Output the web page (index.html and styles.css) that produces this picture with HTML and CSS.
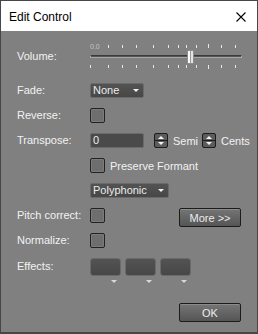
FILE: index.html
```html
<!DOCTYPE html>
<html lang="en">
<head>
    <meta charset="UTF-8">
    <meta name="viewport" content="width=device-width, initial-scale=1.0">
    <title>Edit Control</title>
    <link rel="stylesheet" href="styles.css">
</head>
<body>

    <div class="window">
        <div class="titlebar">
            <span class="title">Edit Control</span>
            <svg class="close" width="10" height="10" viewBox="0 0 10 10">
                <path d="M0.5 0.5 L9.5 9.5 M9.5 0.5 L0.5 9.5" stroke="#000" stroke-width="1.1" fill="none"/>
            </svg>
        </div>

        <div class="content">
            <div class="row row-volume">
                <span class="label">Volume:</span>
                <div class="slider">
                    <span class="slider-value">0.0</span>
                    <!-- tick positions follow the volume scale -->
                    <i class="tick tick-top" style="left:18px"></i>
                    <i class="tick tick-top" style="left:32px"></i>
                    <i class="tick tick-top" style="left:46px"></i>
                    <i class="tick tick-top" style="left:63px"></i>
                    <i class="tick tick-top" style="left:78px"></i>
                    <i class="tick tick-top" style="left:88px"></i>
                    <i class="tick tick-top" style="left:96px"></i>
                    <i class="tick tick-top" style="left:106px"></i>
                    <i class="tick tick-top tick-major" style="left:118px"></i>
                    <i class="tick tick-top" style="left:131px"></i>
                    <i class="tick tick-top" style="left:145px"></i>
                    <div class="track"></div>
                    <i class="tick tick-bottom" style="left:0px"></i>
                    <i class="tick tick-bottom" style="left:18px"></i>
                    <i class="tick tick-bottom" style="left:32px"></i>
                    <i class="tick tick-bottom" style="left:46px"></i>
                    <i class="tick tick-bottom" style="left:63px"></i>
                    <i class="tick tick-bottom" style="left:78px"></i>
                    <i class="tick tick-bottom" style="left:88px"></i>
                    <i class="tick tick-bottom" style="left:96px"></i>
                    <i class="tick tick-bottom" style="left:106px"></i>
                    <i class="tick tick-bottom tick-major" style="left:118px"></i>
                    <i class="tick tick-bottom" style="left:131px"></i>
                    <i class="tick tick-bottom" style="left:145px"></i>
                    <div class="thumb" style="left:97px"></div>
                </div>
            </div>

            <div class="row">
                <span class="label">Fade:</span>
                <div class="dropdown dropdown-fade">
                    <span>None</span>
                    <i class="arrow"></i>
                </div>
            </div>

            <div class="row">
                <span class="label">Reverse:</span>
                <span class="checkbox"></span>
            </div>

            <div class="row">
                <span class="label">Transpose:</span>
                <div class="textbox">0</div>
                <svg class="spin" width="14" height="15" viewBox="0 0 14 15">
                    <rect x="0.5" y="0.5" width="13" height="14" rx="1.5" fill="#5c5c5c" stroke="#1c1c1c"/>
                    <line x1="1" y1="7.5" x2="13" y2="7.5" stroke="#1c1c1c"/>
                    <path d="M4 6 L10 6 L7 3 Z" fill="#f2f2f2"/>
                    <path d="M4 9 L10 9 L7 12 Z" fill="#f2f2f2"/>
                </svg>
                <span class="unit unit-semi">Semi</span>
                <svg class="spin spin-cents" width="14" height="15" viewBox="0 0 14 15">
                    <rect x="0.5" y="0.5" width="13" height="14" rx="1.5" fill="#5c5c5c" stroke="#1c1c1c"/>
                    <line x1="1" y1="7.5" x2="13" y2="7.5" stroke="#1c1c1c"/>
                    <path d="M4 6 L10 6 L7 3 Z" fill="#f2f2f2"/>
                    <path d="M4 9 L10 9 L7 12 Z" fill="#f2f2f2"/>
                </svg>
                <span class="unit">Cents</span>
            </div>

            <div class="row row-indent">
                <span class="checkbox"></span>
                <span class="check-text">Preserve Formant</span>
            </div>

            <div class="row row-indent">
                <div class="dropdown dropdown-mode">
                    <span>Polyphonic</span>
                    <i class="arrow"></i>
                </div>
            </div>

            <div class="row row-pitch">
                <span class="label">Pitch correct:</span>
                <span class="checkbox"></span>
                <button class="button button-more">More &gt;&gt;</button>
            </div>

            <div class="row">
                <span class="label">Normalize:</span>
                <span class="checkbox"></span>
            </div>

            <div class="row row-effects">
                <span class="label label-effects">Effects:</span>
                <div class="effects">
                    <div class="effect">
                        <div class="effect-box"></div>
                        <i class="effect-arrow"></i>
                    </div>
                    <div class="effect">
                        <div class="effect-box"></div>
                        <i class="effect-arrow"></i>
                    </div>
                    <div class="effect">
                        <div class="effect-box"></div>
                        <i class="effect-arrow"></i>
                    </div>
                </div>
            </div>

            <div class="row row-ok">
                <button class="button">OK</button>
            </div>
        </div>
    </div>

</body>
</html>
```

FILE: styles.css
```css
body {
    margin: 0;
    font-family: 'Liberation Sans', Arial, sans-serif;
}

.window {
    width: 258px;
    height: 334px;
    box-sizing: border-box;
    border: 1px solid #474747;
    border-bottom-width: 2px;
    background-color: #808080;
    display: flex;
    flex-direction: column;
}

.titlebar {
    height: 29px;
    background-color: #fff;
    display: flex;
    align-items: center;
    padding: 1px 11px 0 8px;
}

.title {
    flex: 1;
    font-size: 12px;
    color: #000;
}

.close {
    display: block;
}

.content {
    display: flex;
    flex-direction: column;
    gap: 10px;
    padding: 12px 16px 0 16px;
}

.row {
    display: flex;
    align-items: center;
    height: 15px;
    font-size: 11px;
    color: #f2f2f2;
}

.row > * {
    flex-shrink: 0;
}

.label {
    width: 73px;
    line-height: 15px;
}

.row-indent {
    padding-left: 73px;
}

/* volume slider */

.row-volume {
    height: 26px;
    margin-bottom: 4px;
}

.slider {
    position: relative;
    width: 152px;
    height: 26px;
}

.slider-value {
    position: absolute;
    left: 0;
    top: 0;
    font-size: 7px;
    line-height: 7px;
    color: #c4c4c4;
}

.tick {
    position: absolute;
    width: 1px;
    height: 3px;
    background-color: #e6e6e6;
}

.tick-top {
    top: 2px;
}

.tick-top.tick-major {
    top: 1px;
    height: 4px;
}

.tick-bottom {
    top: 22px;
}

.tick-bottom.tick-major {
    height: 4px;
}

.track {
    position: absolute;
    left: 0;
    right: 0;
    top: 12px;
    height: 1px;
    border-top: 1px solid #3a3a3a;
    border-bottom: 1px solid #a6a6a6;
    background-color: #555;
    border-left: 1px solid #a6a6a6;
    border-right: 1px solid #a6a6a6;
}

.thumb {
    position: absolute;
    top: 7px;
    width: 5px;
    height: 12px;
    border: 1px solid #8e8e8e;
    border-radius: 1px;
    background: linear-gradient(to right, #fafafa 0, #fafafa 2px, #9a9a9a 2px, #9a9a9a 3px, #e4e4e4 3px);
}

/* controls */

.dropdown {
    box-sizing: border-box;
    height: 15px;
    border: 1px solid #6a6a6a;
    border-radius: 2px;
    background: linear-gradient(#535353, #474747);
    display: flex;
    align-items: center;
    padding: 0 4px 0 2px;
    line-height: 13px;
    font-size: 11px;
    color: #ececec;
}

.dropdown span {
    flex: 1;
}

.dropdown-fade {
    width: 54px;
}

.dropdown-mode {
    width: 79px;
}

.arrow {
    width: 0;
    height: 0;
    border-left: 3px solid transparent;
    border-right: 3px solid transparent;
    border-top: 3px solid #f2f2f2;
}

.checkbox {
    box-sizing: border-box;
    width: 15px;
    height: 15px;
    border: 1px solid #222;
    border-radius: 2px;
    background-color: #6e6e6e;
    box-shadow: inset 0 0 0 1px #7c7c7c;
}

.check-text {
    margin-left: 5px;
}

.textbox {
    box-sizing: border-box;
    width: 54px;
    height: 15px;
    border: 1px solid #6a6a6a;
    border-radius: 2px;
    background-color: #4a4a4a;
    padding-left: 2px;
    font-size: 11px;
    line-height: 13px;
    color: #ececec;
}

.spin {
    display: block;
    margin-left: 10px;
}

.unit {
    margin-left: 5px;
}

.unit-semi {
    width: 29px;
}

.spin-cents {
    margin-left: 0;
}

.row-pitch {
    align-items: flex-start;
}

.button {
    box-sizing: border-box;
    width: 62px;
    height: 19px;
    border: 1px solid #1c1c1c;
    border-radius: 2px;
    background: linear-gradient(#757575, #555);
    box-shadow: inset 0 1px 0 #8a8a8a;
    font-family: 'Liberation Sans', Arial, sans-serif;
    font-size: 11px;
    color: #ececec;
    padding: 0;
}

.button-more {
    margin-left: auto;
}

/* effects slots */

.row-effects {
    height: 26px;
    align-items: flex-start;
}

.label-effects {
    line-height: 16px;
}

.effects {
    display: flex;
    gap: 4px;
}

.effect {
    display: flex;
    flex-direction: column;
}

.effect-box {
    box-sizing: border-box;
    width: 31px;
    height: 18px;
    border: 1px solid #6a6a6a;
    border-radius: 3px;
    background: linear-gradient(#535353, #474747);
}

.effect-arrow {
    margin: 4px 0 0 21px;
    width: 0;
    height: 0;
    border-left: 3px solid transparent;
    border-right: 3px solid transparent;
    border-top: 3px solid #d8d8d8;
}

.row-ok {
    height: 19px;
    justify-content: flex-end;
    margin-top: 9px;
}
```
